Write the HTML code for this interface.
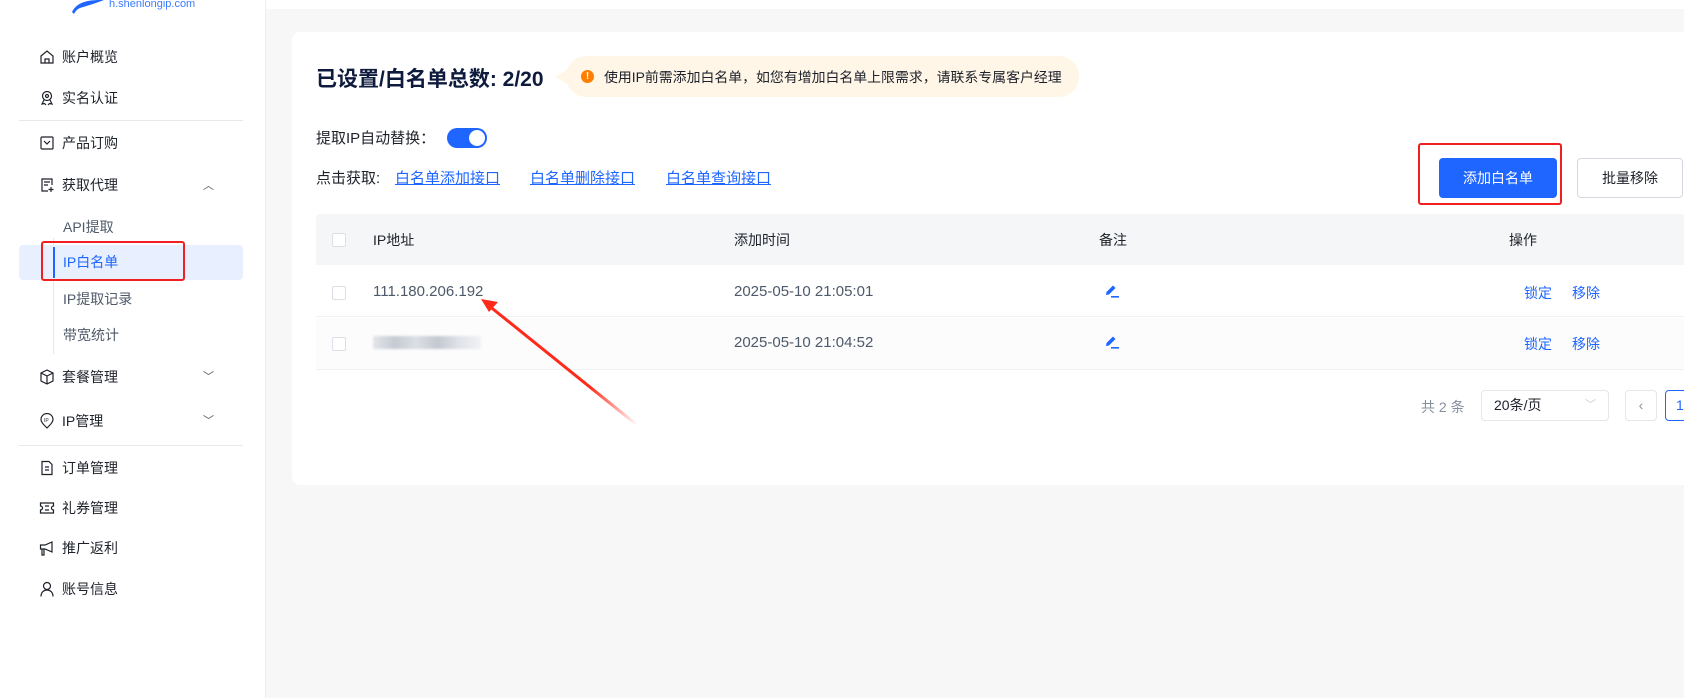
<!DOCTYPE html>
<html><head><meta charset="utf-8"><style>
*{margin:0;padding:0;box-sizing:border-box}
body{width:1684px;height:698px;overflow:hidden;background:#f7f7f8;font-family:"Liberation Sans","Noto Sans CJK SC",sans-serif;color:#1d2129;position:relative}
.abs{position:absolute}
.side{left:0;top:0;width:266px;height:698px;background:#fff;border-right:1px solid #eceef1}
.mi{position:absolute;left:62px;font-size:14px;color:#1d2129;line-height:20px}
.ic{position:absolute;left:39px;width:16px;height:16px}
.sub{position:absolute;left:63px;font-size:14px;color:#4e5969;line-height:20px}
.chev{position:absolute;left:203px;font-size:11px;color:#4e5969}
.hr{position:absolute;left:19px;width:224px;height:1px;background:#e8e9ec}
.th{position:absolute;top:230px;font-size:14px;color:#1d2129}
.td{position:absolute;font-size:14px;color:#4e5969}
.cb{position:absolute;left:332px;width:14px;height:14px;border:1px solid #dcdfe6;border-radius:2px;background:#fff}
.lk{color:#1e66ff;font-size:14px;position:absolute}
</style></head><body>
<div class="abs" style="left:266px;top:0;width:1418px;height:9px;background:#fff"></div>
<div class="abs side">
  <svg class="abs" style="left:70px;top:0" width="36" height="14" viewBox="0 0 36 14"><path d="M2 12 C6 4 14 0 30 0 L34 0 C24 4 16 6 10 8 C8 9 6 10 4 14 Z" fill="#1e66ff"/></svg>
  <div class="abs" style="left:109px;top:-2px;font-size:11px;color:#3b7bff">h.shenlongip.com</div>
  <svg class="ic" style="top:49px" viewBox="0 0 16 16" fill="none" stroke="#1d2129" stroke-width="1.2"><path d="M2 7 L8 2 L14 7 V14 H2 Z M6 14 V10 H10 V14"/></svg>
  <div class="mi" style="top:47px">账户概览</div>
  <svg class="ic" style="top:90px" viewBox="0 0 16 16" fill="none" stroke="#1d2129" stroke-width="1.2"><circle cx="8" cy="6" r="4.5"/><circle cx="8" cy="6" r="1.5"/><path d="M5 10 L3 14 L5.5 13.5 L7 15 M11 10 L13 14 L10.5 13.5 L9 15"/></svg>
  <div class="mi" style="top:88px">实名认证</div>
  <div class="hr" style="top:120px"></div>
  <svg class="ic" style="top:135px" viewBox="0 0 16 16" fill="none" stroke="#1d2129" stroke-width="1.2"><rect x="2" y="2" width="12" height="12" rx="1"/><path d="M5 6 L8 9 L11 6"/></svg>
  <div class="mi" style="top:133px">产品订购</div>
  <svg class="ic" style="top:177px" viewBox="0 0 16 16" fill="none" stroke="#1d2129" stroke-width="1.2"><path d="M13 8 V2 H3 V14 H9 M5 5 H11 M5 8 H9 M12 10 V15 M9.5 12.5 H14.5"/></svg>
  <div class="mi" style="top:175px">获取代理</div>
  <div class="chev" style="top:177px">︿</div>
  <div class="abs" style="left:53px;top:238px;width:1px;height:116px;background:#e5e6eb"></div>
  <div class="sub" style="top:217px">API提取</div>
  <div class="abs" style="left:19px;top:245px;width:224px;height:35px;background:#e8effe;border-radius:4px"></div>
  <div class="abs" style="left:53px;top:247px;width:2px;height:31px;background:#1e66ff"></div>
  <div class="sub" style="top:252px;color:#1e66ff">IP白名单</div>
  <div class="abs" style="left:41px;top:241px;width:144px;height:40px;border:2px solid #f02020;border-radius:3px"></div>
  <div class="sub" style="top:289px">IP提取记录</div>
  <div class="sub" style="top:325px">带宽统计</div>
  <svg class="ic" style="top:369px" viewBox="0 0 16 16" fill="none" stroke="#1d2129" stroke-width="1.2"><path d="M8 1 L14 4 V12 L8 15 L2 12 V4 Z M2 4 L8 7 L14 4 M8 7 V15"/></svg>
  <div class="mi" style="top:367px">套餐管理</div>
  <div class="chev" style="top:368px">﹀</div>
  <svg class="ic" style="top:413px" viewBox="0 0 16 16" fill="none" stroke="#1d2129" stroke-width="1.2"><path d="M8 15 C4 11 2 9 2 6.5 A6 6 0 0 1 14 6.5 C14 9 12 11 8 15 Z"/><text x="5" y="9" font-size="5" fill="#1d2129" stroke="none">IP</text></svg>
  <div class="mi" style="top:411px">IP管理</div>
  <div class="chev" style="top:412px">﹀</div>
  <div class="hr" style="top:445px"></div>
  <svg class="ic" style="top:460px" viewBox="0 0 16 16" fill="none" stroke="#1d2129" stroke-width="1.2"><path d="M3 1.5 H10 L13 4.5 V14.5 H3 Z M6 7 H10 M6 10 H10"/></svg>
  <div class="mi" style="top:458px">订单管理</div>
  <svg class="ic" style="top:500px" viewBox="0 0 16 16" fill="none" stroke="#1d2129" stroke-width="1.2"><path d="M1.5 3 H14.5 V6 A2 2 0 0 0 14.5 10 V13 H1.5 V10 A2 2 0 0 0 1.5 6 Z M6 6 H10 M6 10 H10"/></svg>
  <div class="mi" style="top:498px">礼券管理</div>
  <svg class="ic" style="top:540px" viewBox="0 0 16 16" fill="none" stroke="#1d2129" stroke-width="1.2"><path d="M1.5 5 H6 L13 2 V12 L6 9 H1.5 Z M3 9 V15 H5 V9"/></svg>
  <div class="mi" style="top:538px">推广返利</div>
  <svg class="ic" style="top:581px" viewBox="0 0 16 16" fill="none" stroke="#1d2129" stroke-width="1.2"><circle cx="8" cy="5" r="3.5"/><path d="M2 15.5 C2 11 5 9 8 9 C11 9 14 11 14 15.5"/></svg>
  <div class="mi" style="top:579px">账号信息</div>
</div>

<div class="abs" style="left:292px;top:32px;width:1400px;height:453px;background:#fff;border-radius:8px"></div>
<div class="abs" style="left:316px;top:63px;font-size:21px;font-weight:bold;color:#0e1b3d">已设置/白名单总数: 2/20</div>
<div class="abs" style="left:555px;top:70px;width:0;height:0;border-top:7px solid transparent;border-bottom:7px solid transparent;border-right:12px solid #fff6e8"></div>
<div class="abs" style="left:566px;top:56px;width:513px;height:41px;background:#fff6e8;border-radius:20px"></div>
<div class="abs" style="left:581px;top:70px;width:13px;height:13px;border-radius:50%;background:#ff7d00;color:#fff;font-size:10px;font-weight:bold;text-align:center;line-height:13px">!</div>
<div class="abs" style="left:604px;top:67px;font-size:13.9px;color:#1d2129">使用IP前需添加白名单，如您有增加白名单上限需求，请联系专属客户经理</div>

<div class="abs" style="left:316px;top:127px;font-size:15px;color:#1d2129">提取IP自动替换：</div>
<div class="abs" style="left:447px;top:128px;width:40px;height:20px;border-radius:10px;background:#1e66ff"></div>
<div class="abs" style="left:469px;top:130px;width:16px;height:16px;border-radius:50%;background:#fff"></div>
<div class="abs" style="left:316px;top:167px;font-size:15px;color:#1d2129">点击获取:</div>
<div class="lk" style="left:395px;top:167px;font-size:15px;text-decoration:underline">白名单添加接口</div>
<div class="lk" style="left:530px;top:167px;font-size:15px;text-decoration:underline">白名单删除接口</div>
<div class="lk" style="left:666px;top:167px;font-size:15px;text-decoration:underline">白名单查询接口</div>

<div class="abs" style="left:1418px;top:143px;width:144px;height:62px;border:2px solid #f02020;border-radius:3px"></div>
<div class="abs" style="left:1439px;top:158px;width:118px;height:40px;background:#1e66ff;border-radius:4px;color:#fff;font-size:14px;text-align:center;line-height:40px">添加白名单</div>
<div class="abs" style="left:1577px;top:158px;width:106px;height:40px;border:1px solid #d5d8de;border-radius:4px;background:#fff;font-size:14px;text-align:center;line-height:38px">批量移除</div>

<div class="abs" style="left:316px;top:214px;width:1368px;height:51px;background:#f5f6f8;border-radius:4px 0 0 0"></div>
<div class="abs" style="left:316px;top:265px;width:1368px;height:52px;background:#fff;border-bottom:1px solid #f0f1f3"></div>
<div class="abs" style="left:316px;top:318px;width:1368px;height:52px;background:#fcfcfd;border-bottom:1px solid #f0f1f3"></div>
<div class="cb" style="top:233px"></div><div class="cb" style="top:286px"></div><div class="cb" style="top:337px"></div>
<div class="th" style="left:373px">IP地址</div>
<div class="th" style="left:734px">添加时间</div>
<div class="th" style="left:1099px">备注</div>
<div class="th" style="left:1509px">操作</div>
<div class="td" style="left:373px;top:283px;font-size:15px">111.180.206.192</div>
<div class="td" style="left:734px;top:283px;font-size:15px">2025-05-10 21:05:01</div>
<div class="abs" style="left:373px;top:336px;width:108px;height:13px;background:linear-gradient(90deg,#e4e6ea,#c5cad3 20%,#dcdfe4 40%,#c3c8d1 60%,#e1e3e8 80%,#f1f2f4);filter:blur(1px)"></div>
<div class="td" style="left:734px;top:334px;font-size:15px">2025-05-10 21:04:52</div>
<svg class="abs" style="left:1105px;top:284px" width="14" height="14" viewBox="0 0 14 14"><path d="M1 11 L1.5 8 L8 1.5 L10.5 4 L4 10.5 Z" fill="#1e66ff"/><rect x="6" y="12" width="8" height="1.6" fill="#1e66ff"/></svg>
<svg class="abs" style="left:1105px;top:335px" width="14" height="14" viewBox="0 0 14 14"><path d="M1 11 L1.5 8 L8 1.5 L10.5 4 L4 10.5 Z" fill="#1e66ff"/><rect x="6" y="12" width="8" height="1.6" fill="#1e66ff"/></svg>
<div class="lk" style="left:1524px;top:283px">锁定</div><div class="lk" style="left:1572px;top:283px">移除</div>
<div class="lk" style="left:1524px;top:334px">锁定</div><div class="lk" style="left:1572px;top:334px">移除</div>

<div class="abs" style="left:1421px;top:397px;font-size:14px;color:#86909c">共 2 条</div>
<div class="abs" style="left:1481px;top:390px;width:128px;height:31px;border:1px solid #e5e6eb;border-radius:4px;font-size:14px;line-height:29px;padding-left:12px;color:#1d2129">20条/页<span style="position:absolute;right:12px;top:0;color:#c9cdd4;font-size:11px">﹀</span></div>
<div class="abs" style="left:1625px;top:390px;width:32px;height:31px;border:1px solid #e5e6eb;border-radius:4px;text-align:center;line-height:29px;color:#86909c;font-size:14px">‹</div>
<div class="abs" style="left:1665px;top:390px;width:32px;height:31px;border:1px solid #1e66ff;border-radius:4px;line-height:29px;padding-left:10px;color:#1e66ff;font-size:14px">1</div>

<svg class="abs" style="left:0;top:0" width="1684" height="698"><defs><linearGradient id="g" x1="637" y1="425" x2="481" y2="299" gradientUnits="userSpaceOnUse"><stop offset="0" stop-color="#ff2a1a" stop-opacity="0"/><stop offset="0.3" stop-color="#ff2a1a"/></linearGradient></defs>
<path d="M637 425 L488 305" stroke="url(#g)" stroke-width="3"/>
<path d="M481 299 L498 302 L489 312 Z" fill="#ff2a1a"/></svg>
</body></html>
